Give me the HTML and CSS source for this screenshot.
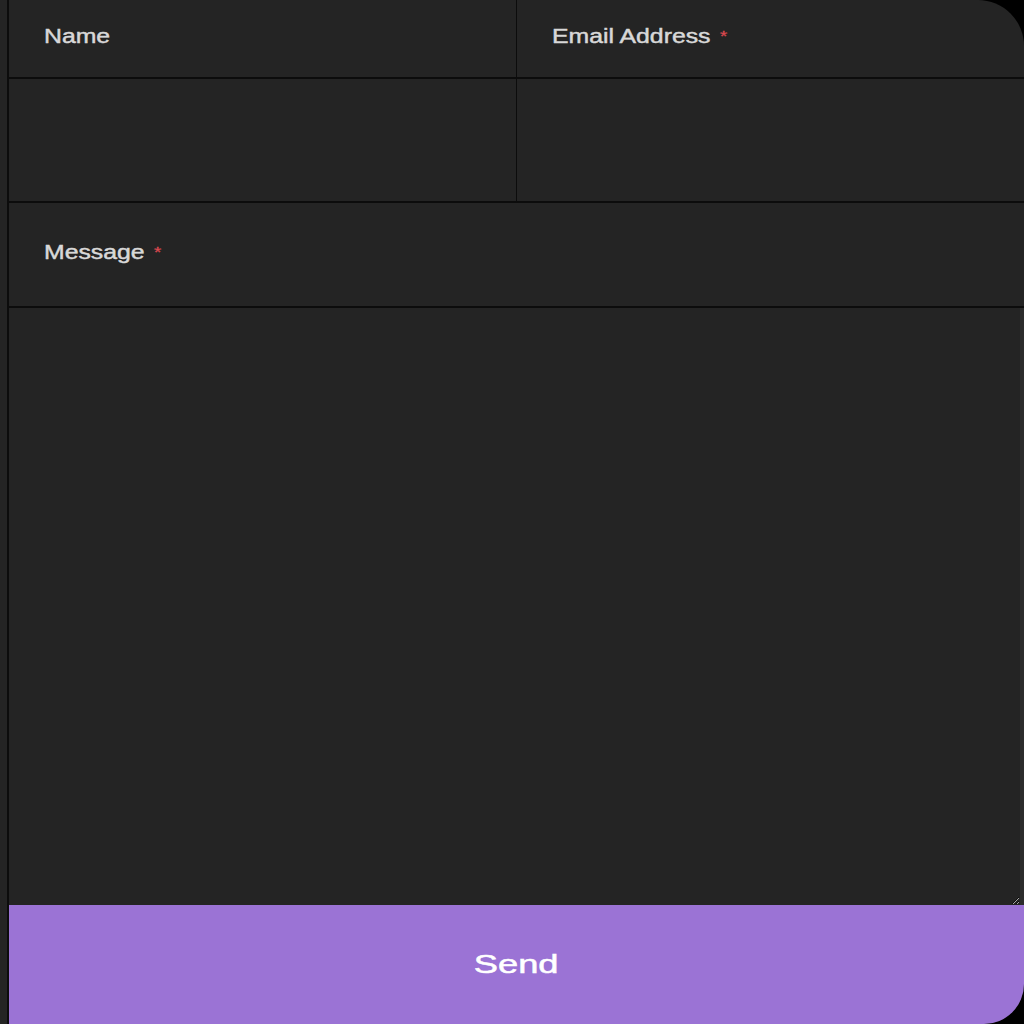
FILE: index.html
```html
<!DOCTYPE html>
<html lang="en">
<head>
<meta charset="utf-8">
<title>Contact</title>
<link rel="stylesheet" href="styles.css">
</head>
<body>
<div class="card">
  <form class="form">
    <div class="row two">
      <label class="cell label left" for="name"><span class="txt">Name</span></label>
      <label class="cell label" for="email"><span class="txt">Email Address <span class="req">*</span></span></label>
    </div>
    <div class="row two inputs">
      <input class="cell field left" id="name" type="text">
      <input class="cell field" id="email" type="email">
    </div>
    <div class="row">
      <label class="cell label msg" for="message"><span class="txt">Message <span class="req">*</span></span></label>
    </div>
    <div class="row area">
      <textarea id="message" class="textarea"></textarea>
    </div>
    <button class="send" type="button"><span class="btxt">Send</span></button>
  </form>
</div>
</body>
</html>
```

FILE: styles.css
```css
html, body {
  margin: 0;
  padding: 0;
  background: #000;
  height: 100%;
}
.card {
  height: 1024px;
  background: #242424;
  border-radius: 0 46px 40px 0;
  overflow: hidden;
  padding-left: 7px;
  box-sizing: border-box;
}
.form {
  height: 100%;
  border-left: 2px solid #0c0c0c;
  display: flex;
  flex-direction: column;
  font-family: "Liberation Sans", Arial, sans-serif;
}
.row {
  border-bottom: 2px solid #0c0c0c;
}
.two {
  display: grid;
  grid-template-columns: 1fr 1fr;
}
.cell {
  box-sizing: border-box;
}
.label {
  height: 77px;
  display: flex;
  align-items: center;
  padding-left: 35px;
  padding-bottom: 4px;
  color: #d8d8d8;
  font-size: 20px;
}
.msg {
  height: 103px;
}
.txt {
  display: inline-block;
  transform: scaleX(1.24);
  transform-origin: left center;
  white-space: nowrap;
  -webkit-text-stroke: 0.45px #d8d8d8;
}
.req {
  color: #d9484f;
  -webkit-text-stroke: 0.3px #d9484f;
  font-size: 15px;
  vertical-align: 2px;
  margin-left: 2px;
}
.inputs {
  height: 122px;
}
.field {
  background: #242424;
  border: none;
  outline: none;
  margin: 0;
  height: 122px;
  color: #ddd;
  padding: 0 36px;
  font: inherit;
}
.left {
  border-right: 1px solid #0c0c0c;
}
.area {
  flex: 1;
  display: flex;
  border-bottom: none;
}
.textarea {
  flex: 1;
  background: #242424;
  border: none;
  border-right: 4px solid #2c2c2c;
  outline: none;
  resize: vertical;
  margin: 0;
  color: #ddd;
  font: inherit;
}
.send {
  height: 119px;
  flex: none;
  border: none;
  margin: 0;
  background: #9b73d5;
  color: #fff;
  font-family: "Liberation Sans", Arial, sans-serif;
  font-size: 25px;
  display: flex;
  align-items: center;
  justify-content: center;
  padding: 0;
}
.btxt {
  display: inline-block;
  transform: scaleX(1.45);
  -webkit-text-stroke: 0.5px #fff;
}
```
